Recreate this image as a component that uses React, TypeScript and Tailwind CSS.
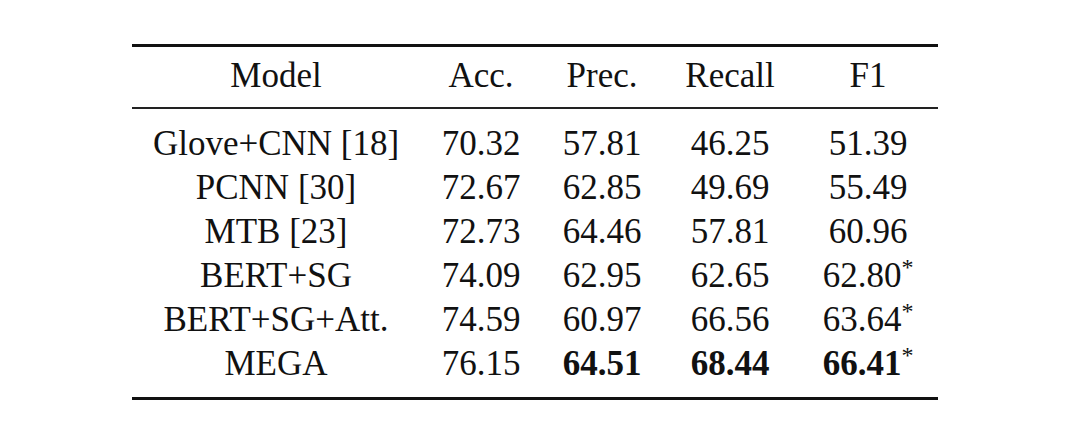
const rows = [
  { model: "Glove+CNN [18]", acc: "70.32", prec: "57.81", recall: "46.25", f1: "51.39" },
  { model: "PCNN [30]", acc: "72.67", prec: "62.85", recall: "49.69", f1: "55.49" },
  { model: "MTB [23]", acc: "72.73", prec: "64.46", recall: "57.81", f1: "60.96" },
  { model: "BERT+SG", acc: "74.09", prec: "62.95", recall: "62.65", f1: "62.80", star: true },
  { model: "BERT+SG+Att.", acc: "74.59", prec: "60.97", recall: "66.56", f1: "63.64", star: true },
  { model: "MEGA", acc: "76.15", prec: "64.51", recall: "68.44", f1: "66.41", star: true, best: true },
];

const cols = "grid grid-cols-[288px_122px_120px_136px_140px] items-center";

export default function App() {
  return (
    <div className="w-[1080px] h-[437px] bg-white pt-[44px] pl-[132px] font-['Liberation_Serif',serif] text-[#111] text-[35px] leading-none">
      <div className="w-[806px] border-t-[3px] border-b-[3px] border-[#111]">
        <div className={`${cols} h-[62px] border-b-2 border-[#222] pb-[3px]`}>
          <div className="text-center">Model</div>
          <div className="text-center">Acc.</div>
          <div className="text-center">Prec.</div>
          <div className="text-center">Recall</div>
          <div className="text-center">F1</div>
        </div>
        <div className="py-[12px]">
          {rows.map((r) => (
            <div key={r.model} className={`${cols} h-[44px]`}>
              <div className="text-center">{r.model}</div>
              <div className="text-center">{r.acc}</div>
              <div className={`text-center ${r.best ? "font-bold" : ""}`}>{r.prec}</div>
              <div className={`text-center ${r.best ? "font-bold" : ""}`}>{r.recall}</div>
              <div className={`text-center ${r.best ? "font-bold" : ""}`}>
                {r.f1}
                {r.star && <sup className="text-[24px] font-normal relative top-[-12px]">*</sup>}
              </div>
            </div>
          ))}
        </div>
      </div>
    </div>
  );
}
